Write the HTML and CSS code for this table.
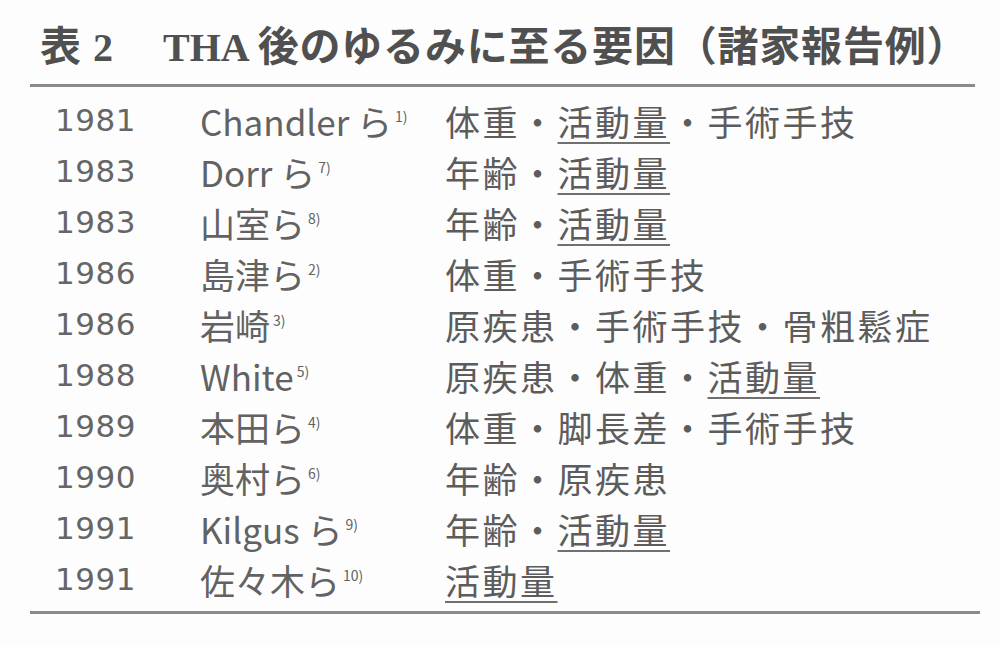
FILE: index.html
```html
<!DOCTYPE html>
<html lang="ja">
<head>
<meta charset="utf-8">
<link rel="stylesheet" href="styles.css">
</head>
<body>
<div class="page">
  <h1 class="title"><span class="hy">表</span><span class="lat">2</span><span class="lat tha">THA</span><span class="hj">後のゆるみに至る要因（諸家報告例）</span></h1>
  <div class="rule"></div>
  <div class="table">
    <div class="row"><span class="yr">1981</span><span class="au">Chandler ら<sup>1)</sup></span><span class="fx">体重・<u>活動量</u>・手術手技</span></div>
    <div class="row"><span class="yr">1983</span><span class="au">Dorr ら<sup>7)</sup></span><span class="fx">年齢・<u>活動量</u></span></div>
    <div class="row"><span class="yr">1983</span><span class="au">山室ら<sup>8)</sup></span><span class="fx">年齢・<u>活動量</u></span></div>
    <div class="row"><span class="yr">1986</span><span class="au">島津ら<sup>2)</sup></span><span class="fx">体重・手術手技</span></div>
    <div class="row"><span class="yr">1986</span><span class="au">岩崎<sup>3)</sup></span><span class="fx">原疾患・手術手技・骨粗鬆症</span></div>
    <div class="row"><span class="yr">1988</span><span class="au">White<sup>5)</sup></span><span class="fx">原疾患・体重・<u>活動量</u></span></div>
    <div class="row"><span class="yr">1989</span><span class="au">本田ら<sup>4)</sup></span><span class="fx">体重・脚長差・手術手技</span></div>
    <div class="row"><span class="yr">1990</span><span class="au">奥村ら<sup>6)</sup></span><span class="fx">年齢・原疾患</span></div>
    <div class="row"><span class="yr">1991</span><span class="au">Kilgus ら<sup>9)</sup></span><span class="fx">年齢・<u>活動量</u></span></div>
    <div class="row"><span class="yr">1991</span><span class="au">佐々木ら<sup>10)</sup></span><span class="fx"><u>活動量</u></span></div>
  </div>
  <div class="rule bottom"></div>
</div>
</body>
</html>
```

FILE: styles.css
```css
html, body {
  margin: 0;
  padding: 0;
  background: #fdfdfd;
}
.page {
  width: 1000px;
  height: 646px;
  box-sizing: border-box;
  padding: 14px 25px 0 30px;
  font-family: "Noto Sans CJK JP", "Noto Sans", sans-serif;
  color: #5e5e5e;
}
.title {
  margin: 0 0 0 10px;
  height: 70px;
  display: flex;
  align-items: baseline;
  font-weight: 700;
  font-size: 41px;
  line-height: 58px;
  color: #505050;
  white-space: nowrap;
}
.title .hy {
  font-family: "Noto Sans CJK JP", sans-serif;
  margin-right: 12px;
}
.title .lat {
  font-family: "Liberation Serif", serif;
  font-size: 40px;
  margin-right: 50px;
}
.title .tha {
  margin-right: 8px;
}
.title .hj {
  letter-spacing: 0.8px;
}
.rule {
  height: 3px;
  background: #8a8a8a;
  margin-top: 0;
  width: 945px;
}
.rule.bottom {
  margin-top: 6px;
  width: 950px;
}
.table {
  padding: 8px 0 0 25px;
}
.row {
  display: grid;
  grid-template-columns: 145px 245px 1fr;
  height: 51px;
  line-height: 51px;
  font-size: 35px;
  white-space: nowrap;
}
.yr {
  font-family: "DejaVu Sans", sans-serif;
  font-size: 31px;
  letter-spacing: 0.5px;
  color: #666;
}
.au {
  color: #626262;
}
.au sup {
  font-size: 14px;
  vertical-align: 0;
  position: relative;
  top: -14px;
  margin-left: 3px;
}
.fx {
  letter-spacing: 2.5px;
  color: #5c5c5c;
}
.fx u {
  text-decoration: underline;
  text-decoration-thickness: 2px;
  text-underline-offset: 6px;
  text-decoration-color: #707070;
}
```
